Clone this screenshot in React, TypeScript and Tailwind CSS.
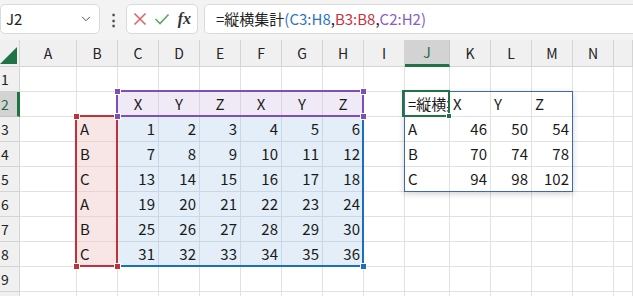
import { ChevronDown } from "lucide-react";

const COLS = ["A", "B", "C", "D", "E", "F", "G", "H", "I", "J", "K", "L", "M", "N", ""];
const ROWS = [1, 2, 3, 4, 5, 6, 7, 8, 9, 10];
const BODY = ["C", "D", "E", "F", "G", "H"];

// cell values
const cells: Record<string, string> = {
  J2: "=縦横集計(C3:H8,B3:B8,C2:H2)",
  K2: "X",
  L2: "Y",
  M2: "Z",
  J3: "A",
  J4: "B",
  J5: "C",
  K3: "46",
  L3: "50",
  M3: "54",
  K4: "70",
  L4: "74",
  M4: "78",
  K5: "94",
  L5: "98",
  M5: "102",
};
["X", "Y", "Z", "X", "Y", "Z"].forEach((v, i) => (cells[BODY[i] + "2"] = v));
["A", "B", "C", "A", "B", "C"].forEach((v, i) => (cells["B" + (i + 3)] = v));
for (let r = 0; r < 6; r++) {
  BODY.forEach((c, i) => (cells[c + (r + 3)] = String(r * 6 + i + 1)));
}

function cellStyle(col: string, row: number) {
  if (row === 2 && BODY.includes(col)) return "bg-[#efeaf6] border-[#dcd4e6] justify-center";
  if (row >= 3 && row <= 8 && col === "B") return "bg-[#f8e6e6] border-[#ead3d3] justify-start pl-[3px]";
  if (row >= 3 && row <= 8 && BODY.includes(col)) return "bg-[#e3eef8] border-[#cbd7e3] justify-end pr-[3px]";
  const v = cells[col + row];
  if (v && /^\d+$/.test(v)) return "bg-white border-[#e1e1e1] justify-end pr-[3px]";
  return "bg-white border-[#e1e1e1] justify-start pl-[3px]";
}

function Handle({ x, y, color }: { x: number; y: number; color: string }) {
  return (
    <div
      className={`absolute w-[7px] h-[7px] border border-white ${color}`}
      style={{ left: x - 3, top: y - 3 }}
    />
  );
}

function Toolbar() {
  return (
    <div className="h-[40px] bg-[#f3f3f3] flex items-start pt-[4px] gap-[6px]">
      <div className="w-[100px] h-[30px] bg-white border border-[#dadada] rounded-[5px] flex items-center justify-between pl-[5px] pr-[6px]">
        <span className="text-[15px] text-[#222]">J2</span>
        <ChevronDown className="w-[14px] h-[14px] text-[#444]" strokeWidth={1.6} />
      </div>
      <div className="w-[14px] h-[30px] flex items-center justify-center text-[#444] text-[15px] font-bold">⋮</div>
      <div className="w-[72px] h-[30px] bg-white border border-[#dadada] rounded-[5px] flex items-center justify-between px-[6px]">
        <svg width="14" height="14" viewBox="0 0 14 14">
          <path d="M1.5 1.5L12.5 12.5M12.5 1.5L1.5 12.5" stroke="#e0605f" strokeWidth="1.5" fill="none" />
        </svg>
        <svg width="16" height="14" viewBox="0 0 16 14">
          <path d="M1.5 7L6 11.5L14.5 2.5" stroke="#5aa862" strokeWidth="1.6" fill="none" />
        </svg>
        <span className="text-[16px] italic text-[#333] font-['Liberation_Serif',serif] font-semibold">fx</span>
      </div>
      <div className="flex-1 h-[30px] bg-white border border-[#dadada] rounded-l-[5px] border-r-0 flex items-center pl-[11px] text-[15px] whitespace-nowrap">
        <span className="text-[#222]">=縦横集計</span>
        <span className="text-[#2f74c6]">(C3:H8</span>
        <span className="text-[#222]">,</span>
        <span className="text-[#c8323e]">B3:B8</span>
        <span className="text-[#222]">,</span>
        <span className="text-[#8b5cc2]">C2:H2)</span>
      </div>
    </div>
  );
}

export default function App() {
  return (
    <div className="w-[633px] h-[296px] overflow-hidden bg-white font-['Noto_Sans_CJK_JP','Noto_Sans',sans-serif]">
      <Toolbar />
      <div className="relative">
        <div className="grid grid-cols-[20px_57px_41px_41px_41px_41px_41px_41px_41px_41px_45px_41px_41px_41px_41px_1fr] grid-rows-[27px_repeat(10,25px)]">
          {/* header row */}
          <div className="bg-[#f0f0f0] border-r border-b border-[#d4d4d4] relative">
            <svg className="absolute right-[2px] bottom-[2px]" width="17" height="17" viewBox="0 0 17 17">
              <polygon points="17,0 17,17 0,17" fill="#217346" />
            </svg>
          </div>
          {COLS.map((c, i) =>
            c === "J" ? (
              <div
                key={i}
                className="bg-[#d3d3d3] border-r border-[#c4c4c4] border-b-[3px] border-b-[#217346] flex items-center justify-center text-[14px] text-[#1e6b41]"
              >
                {c}
              </div>
            ) : (
              <div
                key={i}
                className="bg-[#f0f0f0] border-r border-b border-[#d4d4d4] flex items-center justify-center text-[14px] text-[#222]"
              >
                {c}
              </div>
            )
          )}

          {ROWS.map((r) => [
            r === 2 ? (
              <div
                key={"h" + r}
                className="bg-[#d3d3d3] border-b border-[#c4c4c4] border-r-[3px] border-r-[#217346] flex items-center pl-[1px] text-[14px] text-[#1e6b41]"
              >
                {r}
              </div>
            ) : (
              <div
                key={"h" + r}
                className="bg-[#f0f0f0] border-r border-b border-[#d4d4d4] flex items-center pl-[1px] text-[14px] text-[#222]"
              >
                {r}
              </div>
            ),
            ...COLS.map((c) => (
              <div
                key={c + r}
                className={`border-r border-b flex items-center overflow-hidden whitespace-nowrap text-[15px] text-[#1a1a1a] ${cellStyle(c, r)}`}
              >
                {cells[c + r]}
              </div>
            )),
          ])}
        </div>

        {/* blue range C3:H8 */}
        <div className="absolute left-[116px] top-[75px] w-[248px] h-[152px] border-2 border-[#1b6ec2]" />
        <Handle x={363} y={226} color="bg-[#1b6ec2]" />
        {/* red range B3:B8 */}
        <div className="absolute left-[75px] top-[75px] w-[43px] h-[152px] border-2 border-[#c4303a]" />
        <Handle x={76} y={76} color="bg-[#c4303a]" />
        <Handle x={76} y={226} color="bg-[#c4303a]" />
        <Handle x={117} y={226} color="bg-[#c4303a]" />
        {/* purple range C2:H2 */}
        <div className="absolute left-[116px] top-[50px] w-[248px] h-[27px] border-2 border-[#7f4fb8]" />
        <Handle x={117} y={51} color="bg-[#7f4fb8]" />
        <Handle x={363} y={51} color="bg-[#7f4fb8]" />
        <Handle x={117} y={76} color="bg-[#7f4fb8]" />
        <Handle x={363} y={76} color="bg-[#7f4fb8]" />

        {/* spill range J2:M5 */}
        <div className="absolute left-[404px] top-[51px] w-[169px] h-[101px] border border-[#3d68b8] shadow-[0_2px_6px_rgba(0,0,0,0.18)]" />
        {/* active cell */}
        <div className="absolute left-[402px] top-[50px] w-[48px] h-[27px] border-2 border-[#217346]" />
        <div className="absolute left-[446px] top-[73px] w-[6px] h-[6px] bg-[#217346] border border-white" />
      </div>
    </div>
  );
}
